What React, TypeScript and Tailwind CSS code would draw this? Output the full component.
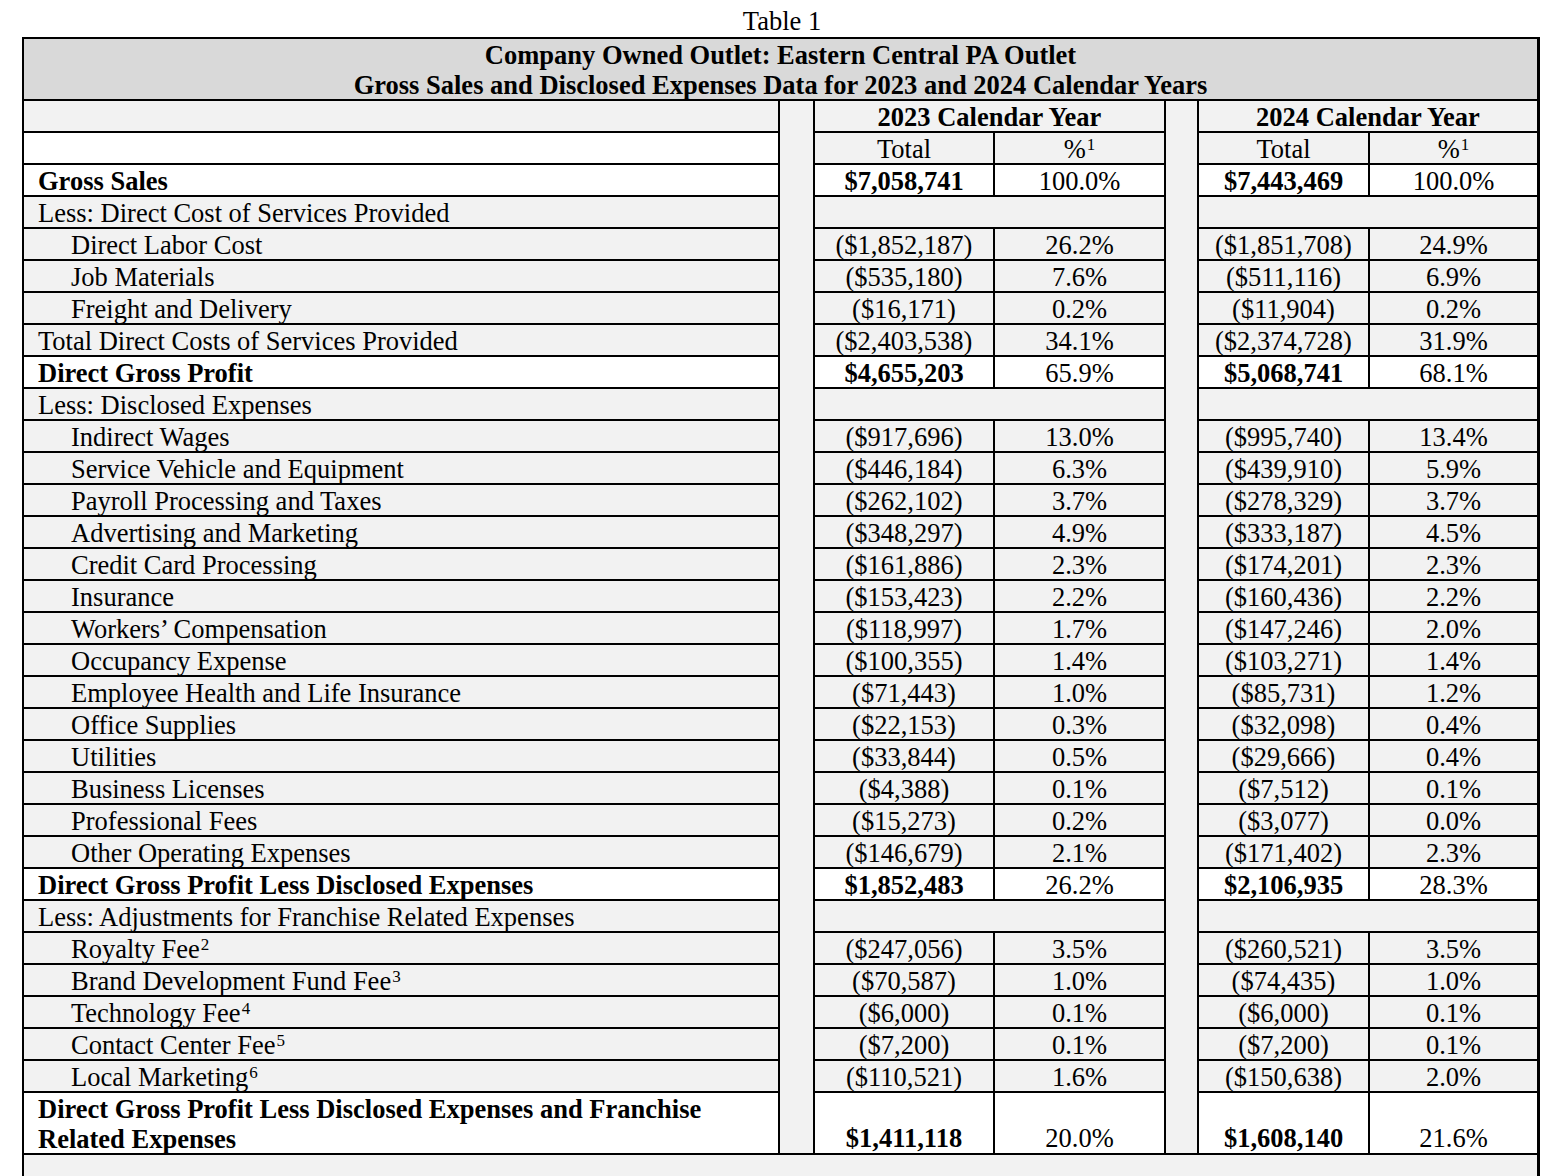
import React from "react";

type R = {
  label: React.ReactNode;
  indent?: boolean;
  bold?: boolean;
  section?: boolean;
  v?: [string, string, string, string];
};

function Sup({ children }: { children: React.ReactNode }) {
  return <sup className="text-[17px] top-[-8px] ml-[1px]">{children}</sup>;
}

const rows: R[] = [
  { label: "Gross Sales", bold: true, v: ["$7,058,741", "100.0%", "$7,443,469", "100.0%"] },
  { label: "Less: Direct Cost of Services Provided", section: true },
  { label: "Direct Labor Cost", indent: true, v: ["($1,852,187)", "26.2%", "($1,851,708)", "24.9%"] },
  { label: "Job Materials", indent: true, v: ["($535,180)", "7.6%", "($511,116)", "6.9%"] },
  { label: "Freight and Delivery", indent: true, v: ["($16,171)", "0.2%", "($11,904)", "0.2%"] },
  { label: "Total Direct Costs of Services Provided", v: ["($2,403,538)", "34.1%", "($2,374,728)", "31.9%"] },
  { label: "Direct Gross Profit", bold: true, v: ["$4,655,203", "65.9%", "$5,068,741", "68.1%"] },
  { label: "Less: Disclosed Expenses", section: true },
  { label: "Indirect Wages", indent: true, v: ["($917,696)", "13.0%", "($995,740)", "13.4%"] },
  { label: "Service Vehicle and Equipment", indent: true, v: ["($446,184)", "6.3%", "($439,910)", "5.9%"] },
  { label: "Payroll Processing and Taxes", indent: true, v: ["($262,102)", "3.7%", "($278,329)", "3.7%"] },
  { label: "Advertising and Marketing", indent: true, v: ["($348,297)", "4.9%", "($333,187)", "4.5%"] },
  { label: "Credit Card Processing", indent: true, v: ["($161,886)", "2.3%", "($174,201)", "2.3%"] },
  { label: "Insurance", indent: true, v: ["($153,423)", "2.2%", "($160,436)", "2.2%"] },
  { label: "Workers\u2019 Compensation", indent: true, v: ["($118,997)", "1.7%", "($147,246)", "2.0%"] },
  { label: "Occupancy Expense", indent: true, v: ["($100,355)", "1.4%", "($103,271)", "1.4%"] },
  { label: "Employee Health and Life Insurance", indent: true, v: ["($71,443)", "1.0%", "($85,731)", "1.2%"] },
  { label: "Office Supplies", indent: true, v: ["($22,153)", "0.3%", "($32,098)", "0.4%"] },
  { label: "Utilities", indent: true, v: ["($33,844)", "0.5%", "($29,666)", "0.4%"] },
  { label: "Business Licenses", indent: true, v: ["($4,388)", "0.1%", "($7,512)", "0.1%"] },
  { label: "Professional Fees", indent: true, v: ["($15,273)", "0.2%", "($3,077)", "0.0%"] },
  { label: "Other Operating Expenses", indent: true, v: ["($146,679)", "2.1%", "($171,402)", "2.3%"] },
  { label: "Direct Gross Profit Less Disclosed Expenses", bold: true, v: ["$1,852,483", "26.2%", "$2,106,935", "28.3%"] },
  { label: "Less: Adjustments for Franchise Related Expenses", section: true },
  { label: <>Royalty Fee<Sup>2</Sup></>, indent: true, v: ["($247,056)", "3.5%", "($260,521)", "3.5%"] },
  { label: <>Brand Development Fund Fee<Sup>3</Sup></>, indent: true, v: ["($70,587)", "1.0%", "($74,435)", "1.0%"] },
  { label: <>Technology Fee<Sup>4</Sup></>, indent: true, v: ["($6,000)", "0.1%", "($6,000)", "0.1%"] },
  { label: <>Contact Center Fee<Sup>5</Sup></>, indent: true, v: ["($7,200)", "0.1%", "($7,200)", "0.1%"] },
  { label: <>Local Marketing<Sup>6</Sup></>, indent: true, v: ["($110,521)", "1.6%", "($150,638)", "2.0%"] },
];

function Row({ r }: { r: R }) {
  const bg = r.bold ? "bg-white" : "bg-[#f2f2f2]";
  const b = r.bold ? "font-bold" : "";
  return (
    <div className="flex h-[32px] leading-[32px]">
      <div
        className={`w-[756px] shrink-0 border-r-2 border-b-2 border-black whitespace-nowrap ${bg} ${b} ${
          r.indent ? "pl-[47px]" : "pl-[14px]"
        }`}
      >
        {r.label}
      </div>
      <div className="w-[33px] shrink-0 bg-[#f2f2f2]" />
      {r.section || !r.v ? (
        <div className="w-[353px] shrink-0 border-l-2 border-r-2 border-b-2 border-black bg-[#f2f2f2]" />
      ) : (
        <>
          <div className={`w-[180px] shrink-0 border-l-2 border-b-2 border-black text-center ${bg} ${b}`}>{r.v[0]}</div>
          <div className={`w-[173px] shrink-0 border-l-2 border-r-2 border-b-2 border-black text-center ${bg}`}>{r.v[1]}</div>
        </>
      )}
      <div className="w-[31px] shrink-0 bg-[#f2f2f2]" />
      {r.section || !r.v ? (
        <div className="w-[340px] shrink-0 border-l-2 border-b-2 border-black bg-[#f2f2f2]" />
      ) : (
        <>
          <div className={`w-[171px] shrink-0 border-l-2 border-b-2 border-black text-center ${bg} ${b}`}>{r.v[2]}</div>
          <div className={`w-[169px] shrink-0 border-l-2 border-b-2 border-black text-center ${bg}`}>{r.v[3]}</div>
        </>
      )}
    </div>
  );
}

export default function App() {
  return (
    <div
      className="bg-white text-black text-[26.5px] min-h-[1176px]"
      style={{ fontFamily: '"Liberation Serif", "Times New Roman", serif' }}
    >
      <div className="h-[37px] pt-[6px] leading-[30px] text-center pl-[6px]">Table 1</div>
      <div className="ml-[22px] w-[1518px] border-l-2 border-r-[3px] border-t-2 border-black">
        {/* Title header */}
        <div className="h-[62px] bg-[#d9d9d9] border-b-2 border-black text-center font-bold leading-[30px] pt-[1px]">
          <div>Company Owned Outlet: Eastern Central PA Outlet</div>
          <div>Gross Sales and Disclosed Expenses Data for 2023 and 2024 Calendar Years</div>
        </div>
        {/* Year header */}
        <div className="flex h-[32px] leading-[32px]">
          <div className="w-[756px] shrink-0 border-r-2 border-b-2 border-black bg-[#f2f2f2]" />
          <div className="w-[33px] shrink-0 bg-[#f2f2f2]" />
          <div className="w-[353px] shrink-0 border-l-2 border-r-2 border-b-2 border-black bg-[#f2f2f2] text-center font-bold">
            2023 Calendar Year
          </div>
          <div className="w-[31px] shrink-0 bg-[#f2f2f2]" />
          <div className="w-[340px] shrink-0 border-l-2 border-b-2 border-black bg-[#f2f2f2] text-center font-bold">
            2024 Calendar Year
          </div>
        </div>
        {/* Total / % header */}
        <div className="flex h-[32px] leading-[32px]">
          <div className="w-[756px] shrink-0 border-r-2 border-b-2 border-black bg-white" />
          <div className="w-[33px] shrink-0 bg-[#f2f2f2]" />
          <div className="w-[180px] shrink-0 border-l-2 border-b-2 border-black bg-[#f2f2f2] text-center">Total</div>
          <div className="w-[173px] shrink-0 border-l-2 border-r-2 border-b-2 border-black bg-[#f2f2f2] text-center">
            %<Sup>1</Sup>
          </div>
          <div className="w-[31px] shrink-0 bg-[#f2f2f2]" />
          <div className="w-[171px] shrink-0 border-l-2 border-b-2 border-black bg-[#f2f2f2] text-center">Total</div>
          <div className="w-[169px] shrink-0 border-l-2 border-b-2 border-black bg-[#f2f2f2] text-center">
            %<Sup>1</Sup>
          </div>
        </div>
        {rows.map((r, i) => (
          <Row key={i} r={r} />
        ))}
        {/* Final two-line row */}
        <div className="flex h-[60px] leading-[30px]">
          <div className="w-[756px] shrink-0 border-r-2 border-black bg-white pl-[14px] pt-[1px] font-bold whitespace-nowrap">
            <div>Direct Gross Profit Less Disclosed Expenses and Franchise</div>
            <div>Related Expenses</div>
          </div>
          <div className="w-[33px] shrink-0 bg-[#f2f2f2]" />
          <div className="w-[180px] shrink-0 border-l-2 border-black bg-white flex items-end justify-center font-bold">
            $1,411,118
          </div>
          <div className="w-[173px] shrink-0 border-l-2 border-r-2 border-black bg-white flex items-end justify-center">
            20.0%
          </div>
          <div className="w-[31px] shrink-0 bg-[#f2f2f2]" />
          <div className="w-[171px] shrink-0 border-l-2 border-black bg-white flex items-end justify-center font-bold">
            $1,608,140
          </div>
          <div className="w-[169px] shrink-0 border-l-2 border-black bg-white flex items-end justify-center">
            21.6%
          </div>
        </div>
        <div className="h-[60px] border-t-2 border-black bg-[#f2f2f2]" />
      </div>
    </div>
  );
}
